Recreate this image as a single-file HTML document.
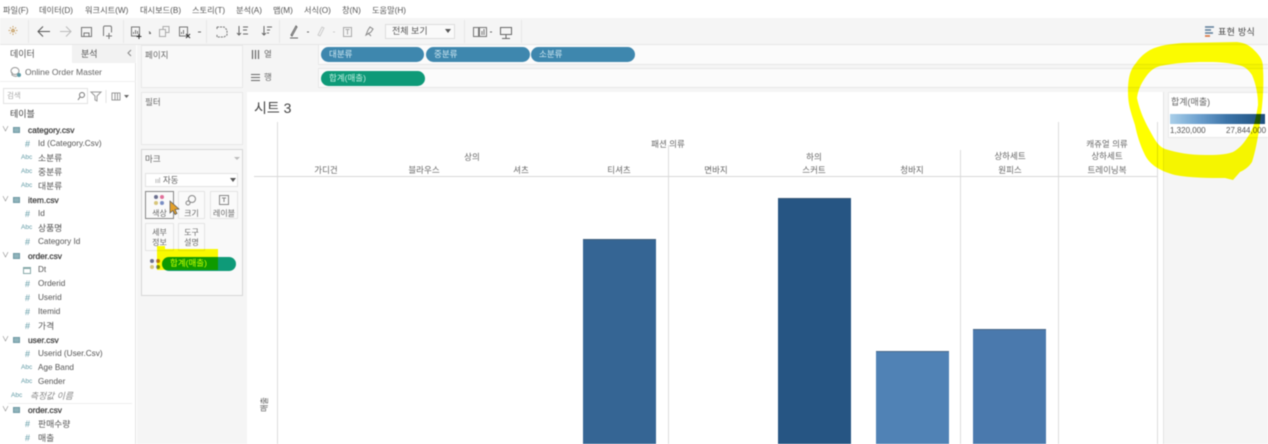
<!DOCTYPE html>
<html lang="ko"><head><meta charset="utf-8"><style>
*{box-sizing:border-box}
html,body{margin:0;padding:0;width:1268px;height:444px;overflow:hidden;background:#fff}
body{font-family:"Liberation Sans","Noto Sans CJK KR",sans-serif;color:#555;font-size:9px;position:relative}
#w{position:absolute;left:0;top:0;width:1268px;height:444px;overflow:hidden;filter:blur(.4px)}
.a{position:absolute;white-space:nowrap}
.b{position:absolute}
.c{position:absolute;white-space:nowrap;transform:translateX(-50%);line-height:12px;color:#666;font-size:8.5px}
.m{position:absolute;top:5px;line-height:12px;font-size:8.2px;color:#555;white-space:nowrap}
.r{position:absolute;left:38px;line-height:14px;font-size:8.8px;color:#555;white-space:nowrap}
.l{font-size:8.2px}
.h{position:absolute;left:28px;line-height:14px;font-size:8.4px;color:#333;white-space:nowrap;-webkit-text-stroke:.2px #333}
.t{position:absolute;left:25px;width:7px;line-height:14px;font-size:9px;color:#5f9aa5;white-space:nowrap}
.ab{position:absolute;left:21px;line-height:14px;font-size:6.5px;color:#5f9aa5}
.chev{position:absolute;left:2px;font-size:7px;line-height:14px;color:#777}
.tb{position:absolute;left:13px;width:7px;height:6px;background:#8fb3bb;border:1px solid #6f98a3}
.pill{position:absolute;height:15px;border-radius:8px;color:#cfe8f2;font-size:8.5px;line-height:14px;padding-left:8px}
.card{position:absolute;background:#fafafa;border:1px solid #e4e4e4;text-align:center;color:#666;font-size:8px;line-height:10px}
.bar{position:absolute;bottom:0;border-top:1px solid rgba(70,90,110,.6)}
.v{position:absolute;width:1px;background:#dcdcdc}
svg{position:absolute}
</style></head><body><div id="w">

<!-- menu -->
<div class="m" style="left:3px">파일(F)</div>
<div class="m" style="left:39px">데이터(D)</div>
<div class="m" style="left:85px">워크시트(W)</div>
<div class="m" style="left:140px">대시보드(B)</div>
<div class="m" style="left:192px">스토리(T)</div>
<div class="m" style="left:236px">분석(A)</div>
<div class="m" style="left:273px">맵(M)</div>
<div class="m" style="left:304px">서식(O)</div>
<div class="m" style="left:342px">창(N)</div>
<div class="m" style="left:372px">도움말(H)</div>

<!-- toolbar -->
<div class="b" style="left:0;top:18px;width:1268px;height:27px;background:#f5f5f5;border-bottom:1px solid #e6e6e6"></div>
<div class="v" style="left:28px;top:20px;height:23px;background:#e8e8e8"></div>
<div class="v" style="left:123px;top:20px;height:23px;background:#e8e8e8"></div>
<div class="v" style="left:206px;top:20px;height:23px;background:#e8e8e8"></div>
<div class="v" style="left:279px;top:20px;height:23px;background:#e8e8e8"></div>
<div class="v" style="left:464px;top:20px;height:23px;background:#e8e8e8"></div>
<div class="v" style="left:521px;top:20px;height:23px;background:#e8e8e8"></div>
<svg style="left:0;top:18px" width="540" height="26" fill="none" stroke="#777" stroke-width="1">
 <g stroke="#c9a36a" stroke-dasharray="1.5 1"><path d="M13 8v9M8.500 12.500h9M10 9.500l6 6M16 9.500l-6 6"/></g>
 <path d="M38 13.500h12M43 8.500l-5 5 5 5" stroke="#555"/>
 <path d="M60 13.500h11M66 8.500l5 5-5 5" stroke="#bbb"/>
 <path d="M81.500 9.500h10v9h-10z M84 18v-3h5v3"/>
 <path d="M103.500 18V9.500q0-1.500 1.500-1.500h5q1.500 0 1.500 1.500v5M109 15v6M106 18h6" />
 <path d="M131.500 9v9h8v-9zM133.500 16v-2M135.500 16v-4M137.500 16v-3" /><path d="M139 16v5M136.500 18.500h5" stroke="#333"/>
 <path d="M149 15.500l2 0M149 13.500l1.500 1.500" stroke="#666"/>
 <path d="M159.500 11.500h6v7h-6zM163 11V8.500h6v6h-3" stroke="#aaa"/>
 <path d="M179.500 9v9h8v-9zM181.500 16v-2M183.500 16v-4"/><path d="M186 16l4 4M190 16l-4 4" stroke="#333"/>
 <path d="M198 14h3" stroke="#666"/>
 <path d="M217 9h7l3 3v5l-3 2h-7v-3M217 9v3" stroke-dasharray="2 1"/>
 <path d="M239 8v9M237 15l2 2 2-2M243 9h5M243 12h4M243 16h5" stroke="#666"/>
 <path d="M264 8v9M262 15l2 2 2-2M267 9h5M267 12h3M267 15h2" stroke="#666"/>
 <path d="M291 17l5-9 1 1-5 9zM290 20h8" stroke="#666"/><path d="M307 14h2" stroke="#666"/>
 <path d="M318 17l4-8 2 1-4 8z" stroke="#ccc"/><path d="M333 14h2" stroke="#ccc"/>
 <path d="M343.500 9.500h8v9h-8zM345.500 11.500h4M347.500 11.500v5" stroke="#aaa"/>
 <path d="M366 17l2-5 2-3 3 2-2 3-5 3zM368 15l3 3" stroke="#888"/>
 <path d="M473.500 9.500h5v9h-5zM479.500 9.500h7v9h-7zM482 17v-4M484 17v-6" stroke="#777"/><path d="M490 14h2" stroke="#666"/>
 <path d="M500.500 9.500h11v7h-11zM506 17v3M502 20.500h8" stroke="#666"/>
</svg>
<div class="a" style="left:385px;top:24px;width:70px;height:15px;background:#fafafa;border:1px solid #ddd;font-size:9px;line-height:13px;padding-left:6px;color:#555">전체 보기</div>
<div class="a" style="left:445px;top:29px;width:0;height:0;border:3px solid transparent;border-top:4px solid #555"></div>
<svg style="left:1204px;top:25px" width="12" height="14"><path d="M1 2h9M1 5h6M1 8h8" stroke="#5d7d9b" stroke-width="1.600"/><path d="M1 11h5" stroke="#d9703c" stroke-width="1.600"/></svg>
<div class="a" style="left:1218px;top:26px;font-size:9px;line-height:12px;color:#444;letter-spacing:.3px">표현 방식</div>

<!-- left pane -->
<div class="b" style="left:0;top:45px;width:136px;height:399px;background:#fff;border-right:1px solid #e4e4e4"></div>
<div class="b" style="left:72px;top:45px;width:64px;height:18px;background:#f2f2f2"></div>
<div class="a" style="left:10px;top:48px;line-height:12px;color:#555;font-size:9px">데이터</div>
<div class="a" style="left:81px;top:48px;line-height:12px;color:#555;font-size:9px">분석</div>
<svg style="left:126px;top:48px" width="8" height="10"><path d="M5 2L2 5l3 3" fill="none" stroke="#888"/></svg>
<svg style="left:9px;top:66px" width="14" height="13" fill="none" stroke="#999"><ellipse cx="6" cy="5" rx="4" ry="3.500"/><path d="M3 6v3q3 2 5 1"/><circle cx="10" cy="9" r="2" fill="#5c9aa5" stroke="none"/></svg>
<div class="a" style="left:25px;top:66px;line-height:13px;color:#666;font-size:8.500px">Online Order Master</div>
<div class="b" style="left:0;top:81px;width:136px;height:1px;background:#efefef"></div>
<div class="b" style="left:3px;top:88px;width:85px;height:16px;border:1px solid #e2e2e2;background:#fff;color:#aaa;font-size:7.500px;line-height:14px;padding-left:3px">검색</div>
<svg style="left:76px;top:90px" width="60" height="13" fill="none" stroke="#777"><circle cx="6" cy="5" r="2.500"/><path d="M4 7L2 10"/><path d="M15 2h10l-4 4v5l-2-1V6z" stroke="#999"/><path d="M30 0v13" stroke="#e4e4e4"/><path d="M36 3h8v7h-8zM39 3v7M41.500 3v7" stroke="#999"/><path d="M48 5l2.500 3L53 5z" fill="#666" stroke="none"/></svg>
<div class="a" style="left:10px;top:108px;line-height:13px;color:#444;font-size:9px">테이블</div>

<!-- field list -->
<span class="chev" style="top:123px">∨</span><i class="tb" style="top:127px"></i><div class="h" style="top:123px">category.csv</div>
<span class="t" style="top:137px">#</span><div class="r l" style="top:137px">Id (Category.Csv)</div>
<span class="ab" style="top:151px">Abc</span><div class="r" style="top:151px">소분류</div>
<span class="ab" style="top:165px">Abc</span><div class="r" style="top:165px">중분류</div>
<span class="ab" style="top:179px">Abc</span><div class="r" style="top:179px">대분류</div>
<span class="chev" style="top:193px">∨</span><i class="tb" style="top:197px"></i><div class="h" style="top:193px">item.csv</div>
<span class="t" style="top:207px">#</span><div class="r l" style="top:207px">Id</div>
<span class="ab" style="top:221px">Abc</span><div class="r" style="top:221px">상품명</div>
<span class="t" style="top:235px">#</span><div class="r l" style="top:235px">Category Id</div>
<span class="chev" style="top:249px">∨</span><i class="tb" style="top:253px"></i><div class="h" style="top:249px">order.csv</div>
<i class="b" style="left:23px;top:267px;width:8px;height:7px;border:1px solid #8aa;border-top-width:2px"></i><div class="r l" style="top:263px">Dt</div>
<span class="t" style="top:277px">#</span><div class="r l" style="top:277px">Orderid</div>
<span class="t" style="top:291px">#</span><div class="r l" style="top:291px">Userid</div>
<span class="t" style="top:305px">#</span><div class="r l" style="top:305px">Itemid</div>
<span class="t" style="top:319px">#</span><div class="r" style="top:319px">가격</div>
<span class="chev" style="top:333px">∨</span><i class="tb" style="top:337px"></i><div class="h" style="top:333px">user.csv</div>
<span class="t" style="top:347px">#</span><div class="r l" style="top:347px">Userid (User.Csv)</div>
<span class="ab" style="top:361px">Abc</span><div class="r l" style="top:361px">Age Band</div>
<span class="ab" style="top:375px">Abc</span><div class="r l" style="top:375px">Gender</div>
<span class="ab" style="top:389px;left:11px">Abc</span><div class="r" style="top:389px;left:30px;font-style:italic;color:#888">측정값 이름</div>
<div class="b" style="left:8px;top:403px;width:124px;height:1px;background:#eee"></div>
<span class="chev" style="top:403px">∨</span><i class="tb" style="top:407px"></i><div class="h" style="top:403px">order.csv</div>
<span class="t" style="top:417px">#</span><div class="r" style="top:417px">판매수량</div>
<span class="t" style="top:431px">#</span><div class="r" style="top:431px">매출</div>

<!-- middle -->
<div class="b" style="left:137px;top:45px;width:1131px;height:399px;background:#f5f5f5"></div>
<div class="b" style="left:141px;top:45px;width:102px;height:43px;background:#f9f9f9;border:1px solid #e8e8e8"></div>
<div class="a" style="left:145px;top:49px;font-size:8.500px;line-height:12px;color:#666">페이지</div>
<div class="b" style="left:141px;top:92px;width:102px;height:53px;background:#f9f9f9;border:1px solid #e8e8e8"></div>
<div class="a" style="left:145px;top:96px;font-size:8.500px;line-height:12px;color:#666">필터</div>
<div class="b" style="left:141px;top:149px;width:102px;height:147px;background:#f9f9f9;border:1px solid #d8d8d8"></div>
<div class="a" style="left:145px;top:153px;font-size:8.500px;line-height:12px;color:#666">마크</div>
<div class="a" style="left:234px;top:157px;width:0;height:0;border:3px solid transparent;border-top:3px solid #bbb"></div>
<div class="b" style="left:145px;top:173px;width:93px;height:14px;background:#fff;border:1px solid #e2e2e2"></div>
<div class="a" style="left:155px;top:173px;font-size:8.500px;line-height:14px;color:#666"><span style="color:#999;font-size:7px">ııl</span> 자동</div>
<div class="a" style="left:230px;top:178px;width:0;height:0;border:3px solid transparent;border-top:4px solid #555"></div>

<div class="card" style="left:145px;top:191px;width:29px;height:28px;border-color:#888;padding-top:17px">색상</div>
<div class="card" style="left:178px;top:191px;width:27px;height:28px;padding-top:17px">크기</div>
<div class="card" style="left:210px;top:191px;width:28px;height:28px;padding-top:17px">레이블</div>
<div class="card" style="left:145px;top:223px;width:29px;height:28px;padding-top:4px">세부<br>정보</div>
<div class="card" style="left:178px;top:223px;width:27px;height:28px;padding-top:4px">도구<br>설명</div>
<svg style="left:150px;top:193px" width="90" height="16"><circle cx="6" cy="4" r="2" fill="#6b6f8e"/><circle cx="12" cy="4" r="2" fill="#e0709a"/><circle cx="6" cy="10" r="2" fill="#d7c57a"/><circle cx="12" cy="10" r="2" fill="#7a8ec4"/>
<g fill="none" stroke="#888"><circle cx="42" cy="6" r="3.500"/><circle cx="38" cy="10" r="2"/><rect x="69.500" y="2.500" width="9" height="9"/><path d="M72 5h4M74 5v4"/></g></svg>
<svg style="left:168px;top:200px" width="12" height="16"><path d="M2 1l0 12 3-2.500 2 4 2-1-2-4 4-.5z" fill="#e3a02a" stroke="#555" stroke-width=".7"/></svg>

<div class="pill" style="left:162px;top:257px;width:74px;height:14px;background:#0e9a78;line-height:13px;padding-left:8px;color:#cff">합계(매출)</div>
<svg style="left:149px;top:258px" width="14" height="14"><circle cx="3" cy="3" r="2" fill="#6b6f8e"/><circle cx="9" cy="3" r="2" fill="#b87a8e"/><circle cx="3" cy="9" r="2" fill="#d7c57a"/><circle cx="9" cy="9" r="2" fill="#7a8ec4"/></svg>
<svg style="left:156px;top:245px;mix-blend-mode:multiply" width="63" height="26"><path d="M1 1H9V4H62V25H1z" fill="#ffff00"/></svg>

<!-- shelves -->
<div class="b" style="left:247px;top:45px;width:1021px;height:20px;background:#fbfbfb;border-bottom:1px solid #e6e6e6"></div>
<div class="b" style="left:247px;top:45px;width:72px;height:20px;background:#f5f5f5;border-right:1px solid #e8e8e8"></div>
<div class="b" style="left:247px;top:68px;width:1021px;height:20px;background:#fbfbfb;border-top:1px solid #e6e6e6;border-bottom:1px solid #e6e6e6"></div>
<div class="b" style="left:247px;top:68px;width:72px;height:20px;background:#f5f5f5;border-right:1px solid #e8e8e8"></div>
<svg style="left:251px;top:49px" width="10" height="34" fill="none" stroke="#666"><path d="M1.500 1v9M4.500 1v9M7.500 1v9" stroke-width="1.200"/><path d="M0 25.500h9M0 28.500h9M0 31.500h9" /></svg>
<div class="a" style="left:264px;top:48px;font-size:8.500px;line-height:12px;color:#666">열</div>
<div class="a" style="left:264px;top:71px;font-size:8.500px;line-height:12px;color:#666">행</div>
<div class="pill" style="left:321px;top:47px;width:103px;background:#3e87ae">대분류</div>
<div class="pill" style="left:426px;top:47px;width:104px;background:#3e87ae">중분류</div>
<div class="pill" style="left:531px;top:47px;width:104px;background:#3e87ae">소분류</div>
<div class="pill" style="left:321px;top:71px;width:104px;background:#0e9a78;color:#bfeee0">합계(매출)</div>

<!-- canvas -->
<div class="b" style="left:247px;top:92px;width:916px;height:352px;background:#fff"></div>
<div class="a" style="left:254px;top:99px;font-size:14px;line-height:18px;color:#444">시트 3</div>
<div class="v" style="left:277px;top:122px;height:322px"></div>
<div class="v" style="left:668px;top:145px;height:299px"></div>
<div class="v" style="left:960px;top:150px;height:294px"></div>
<div class="v" style="left:1058px;top:122px;height:322px"></div>
<div class="v" style="left:1157px;top:122px;height:322px"></div>
<div class="b" style="left:254px;top:176px;width:903px;height:1px;background:#d8d8d8"></div>

<div class="c" style="left:668px;top:138px">패션 의류</div>
<div class="c" style="left:472px;top:151px">상의</div>
<div class="c" style="left:814px;top:151px">하의</div>
<div class="c" style="left:1010px;top:150px">상하세트</div>
<div class="c" style="left:1107px;top:138px">캐쥬얼 의류</div>
<div class="c" style="left:1107px;top:150px">상하세트</div>
<div class="c" style="left:326px;top:164px">가디건</div>
<div class="c" style="left:424px;top:164px">블라우스</div>
<div class="c" style="left:521px;top:164px">셔츠</div>
<div class="c" style="left:619px;top:164px">티셔츠</div>
<div class="c" style="left:716px;top:164px">면바지</div>
<div class="c" style="left:814px;top:164px">스커트</div>
<div class="c" style="left:912px;top:164px">청바지</div>
<div class="c" style="left:1010px;top:164px">원피스</div>
<div class="c" style="left:1107px;top:164px">트레이닝복</div>

<div class="bar" style="left:583px;top:239px;width:73px;background:#356594"></div>
<div class="bar" style="left:778px;top:198px;width:73px;background:#265583"></div>
<div class="bar" style="left:876px;top:351px;width:73px;background:#5082b5"></div>
<div class="bar" style="left:973px;top:329px;width:73px;background:#4a79ad"></div>

<div class="a" style="left:257px;top:400px;font-size:8px;line-height:9px;color:#555;transform:rotate(-90deg);transform-origin:center">매출</div>

<!-- legend -->
<div class="b" style="left:1163px;top:92px;width:105px;height:352px;background:#f5f5f5;border-left:1px solid #e4e4e4"></div>
<div class="b" style="left:1168px;top:92px;width:100px;height:46px;background:#fff;border:1px solid #eaeaea;border-right:0"></div>
<div class="a" style="left:1171px;top:96px;font-size:9px;line-height:12px;color:#666">합계(매출)</div>
<div class="b" style="left:1170px;top:114px;width:95px;height:10px;background:linear-gradient(90deg,#a9cfe9,#6ea1cf 30%,#3c74a8 60%,#1d4e7d)"></div>
<div class="a" style="left:1170px;top:125px;font-size:8px;line-height:11px;color:#555">1,320,000</div>
<div class="a" style="left:1226px;top:125px;font-size:8px;line-height:11px;color:#555">27,844,000</div>

<!-- yellow scribble -->
<svg style="left:0;top:0;mix-blend-mode:multiply" width="1268" height="444"><path fill="#ffff00" fill-rule="evenodd" d="M1150 50C1160 45 1170 44 1183 43L1237 42C1246 43 1250 46 1254 50C1260 56 1263 60 1263 68C1264 85 1263 100 1261 115C1259 132 1256 150 1252 162C1248 168 1244 170 1240 172L1233 180L1225 178C1210 178 1190 178 1175 175C1160 171 1150 165 1145 155C1140 145 1137 135 1135 125C1131 112 1128 105 1128 92C1128 78 1130 70 1136 63C1140 57 1145 53 1150 50ZM1137 98C1140 112 1145 122 1150 131C1155 140 1158 146 1165 149C1178 153 1190 155 1205 155C1215 155 1225 155 1233 152C1240 148 1244 143 1249 135C1254 127 1256 118 1258 105C1258 95 1256 84 1252 75C1248 69 1244 66 1238 65C1225 62 1215 62 1205 62C1190 62 1175 63 1160 66C1153 68 1149 72 1145 78C1141 84 1138 90 1137 98Z"/></svg>

</div></body></html>
